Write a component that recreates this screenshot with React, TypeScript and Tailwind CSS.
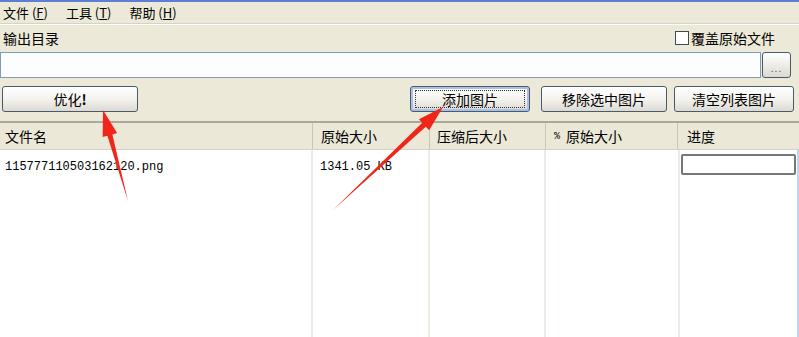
import React from 'react'

const cjk = { fontFamily: '"Noto Sans CJK SC", "Liberation Sans", sans-serif' }
const mono = { fontFamily: '"Liberation Mono", "Noto Sans CJK SC", monospace' }

function XpButton({ label, className, focused }: { label: React.ReactNode; className: string; focused?: boolean }) {
  return (
    <div
      className={
        'h-[26px] rounded-[3px] border border-[#4a5a6e] bg-gradient-to-b from-white via-[#f4f3ee] to-[#dcdad0] flex items-center justify-center text-[14px] text-black ' +
        className +
        (focused ? ' shadow-[inset_0_0_0_2px_#a9c0e8]' : '')
      }
    >
      {focused ? (
        <div className="w-[calc(100%-8px)] h-[18px] border border-dotted border-[#333] flex items-center justify-center">{label}</div>
      ) : (
        label
      )}
    </div>
  )
}

function Arrow({ x1, y1, x2, y2 }: { x1: number; y1: number; x2: number; y2: number }) {
  const dx = x2 - x1
  const dy = y2 - y1
  const len = Math.hypot(dx, dy)
  const ux = dx / len
  const uy = dy / len
  const px = -uy
  const py = ux
  const headLen = 26
  const bx = x2 - ux * headLen
  const by = y2 - uy * headLen
  const pts = [
    [x1, y1],
    [bx + px * 2.6, by + py * 2.6],
    [bx + px * 7.5, by + py * 7.5],
    [x2, y2],
    [bx - px * 7.5, by - py * 7.5],
    [bx - px * 2.6, by - py * 2.6],
  ]
  return <polygon points={pts.map((p) => p.join(',')).join(' ')} fill="#f0261b" />
}

export default function App() {
  return (
    <div className="relative w-[799px] h-[337px] overflow-hidden bg-[#ece9d8] text-[14px] text-black flex flex-col" style={cjk}>
      <div className="h-[2px] bg-[#5b7fd6]" />
      {/* menu */}
      <div className="h-[21px] flex items-center gap-[18px] pl-[3px] text-[13px] leading-none">
        <span>文件 (<u>F</u>)</span>
        <span>工具 (<u>T</u>)</span>
        <span>帮助 (<u>H</u>)</span>
      </div>
      <div className="h-[1px] bg-[#d6d3c4]" />
      <div className="h-[1px] bg-white" />

      {/* output dir */}
      <div className="h-[26px] flex items-center justify-between pl-[3px] pr-[24px]">
        <span>输出目录</span>
        <div className="flex items-center gap-[2px]">
          <div className="w-[14px] h-[14px] border border-[#3d4a58] bg-white" />
          <span>覆盖原始文件</span>
        </div>
      </div>
      <div className="h-[26px] mt-[1px] flex items-center">
        <div className="w-[761px] h-[26px] border border-[#7f9db9] bg-[#fbfdff]" />
        <div className="ml-[1px] w-[29px] h-[26px] rounded-[3px] border border-[#4a5a6e] bg-gradient-to-b from-white to-[#dcdad0] flex items-end justify-center pb-[4px] text-[10px] leading-none tracking-[1px] text-[#555]">
          ...
        </div>
      </div>

      {/* buttons */}
      <div className="h-[26px] mt-[8px] flex items-center">
        <XpButton label={<span>优化<b>!</b></span>} className="ml-[2px] w-[136px]" />
        <XpButton label="添加图片" className="ml-[272px] w-[120px]" focused />
        <XpButton label="移除选中图片" className="ml-[11px] w-[126px]" />
        <XpButton label="清空列表图片" className="ml-[7px] w-[120px]" />
      </div>

      <div className="mt-[9px] h-[2px] bg-[#aca899]" />

      {/* table header */}
      <div className="h-[27px] grid grid-cols-[313px_117px_116px_132px_121px] bg-[#ebe8d7] border-b border-[#d6d2c2]">
        <div className="pl-[5px] flex items-center border-r border-[#cbc7b8]">文件名</div>
        <div className="pl-[8px] flex items-center border-r border-[#cbc7b8]">原始大小</div>
        <div className="pl-[7px] flex items-center border-r border-[#cbc7b8]">压缩后大小</div>
        <div className="pl-[8px] flex items-center border-r border-[#cbc7b8]">
          <span className="text-[10px] mr-[6px]" style={mono}>%</span>原始大小
        </div>
        <div className="pl-[9px] flex items-center">进度</div>
      </div>

      {/* table body */}
      <div className="flex-1 grid grid-cols-[313px_117px_116px_134px_119px] bg-white border-r-2 border-[#c5d3ee]">
        <div className="border-r-2 border-[#ecebe4] pl-[5px] pt-[11px] leading-none text-[12px]" style={mono}>115777110503162120.png</div>
        <div className="border-r-2 border-[#ecebe4] pl-[7px] pt-[11px] leading-none text-[12px]" style={mono}>1341.05 KB</div>
        <div className="border-r-2 border-[#ecebe4]" />
        <div className="border-r-2 border-[#ecebe4]" />
        <div className="pt-[4px] pl-[1px]">
          <div className="w-[115px] h-[21px] rounded-[2px] border-2 border-[#777] bg-white" />
        </div>
      </div>

      {/* annotation arrows */}
      <svg className="absolute inset-0 pointer-events-none" width={799} height={337}>
        <Arrow x1={128} y1={201} x2={103} y2={110} />
        <Arrow x1={333} y1={210} x2={443} y2={107} />
      </svg>
    </div>
  )
}
